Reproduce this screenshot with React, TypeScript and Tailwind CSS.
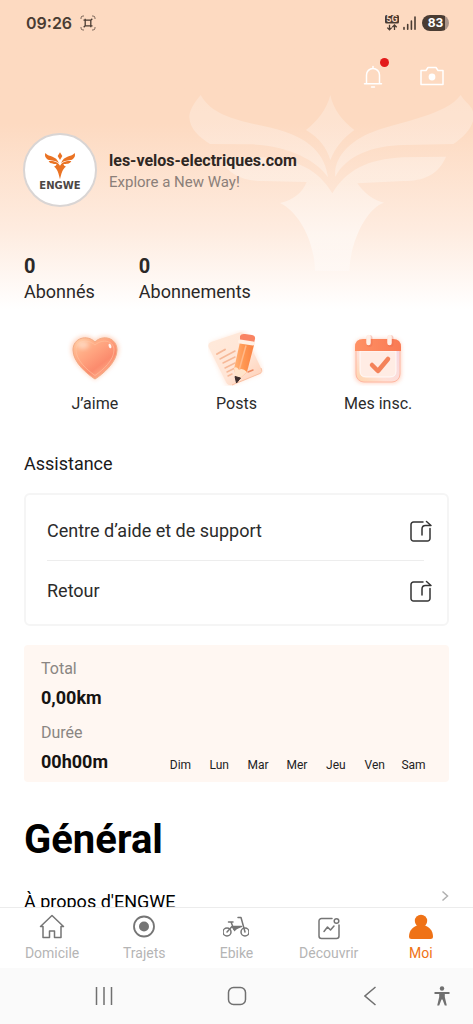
import React from 'react'

const stats = [
  { value: '0', label: 'Abonnés' },
  { value: '0', label: 'Abonnements' },
]

const days = ['Dim', 'Lun', 'Mar', 'Mer', 'Jeu', 'Ven', 'Sam']

function StatusBar() {
  return (
    <div className="flex h-[46px] items-center justify-between pl-[26px] pr-6 text-[#4a3c33]">
      <div className="flex items-center gap-2">
        <span className="font-['Inter','Roboto',sans-serif] text-base font-semibold">09:26</span>
        <svg className="size-4" viewBox="0 0 16 16" fill="none" stroke="currentColor">
          <path d="M1 4V3a2 2 0 0 1 2-2h1M12 1h1a2 2 0 0 1 2 2v1M15 12v1a2 2 0 0 1-2 2h-1M4 15H3a2 2 0 0 1-2-2v-1" strokeOpacity=".7" />
          <path d="M5.2 3.800V10.800H12.500M3.500 5.200H10.800V12.300M10.800 5.200L12.300 3.700M5.200 10.800L3.700 12.300" strokeWidth="1.3" />
        </svg>
      </div>
      <div className="flex items-center">
        <svg className="mr-1 h-4 w-3.5" viewBox="0 0 14 16">
          <rect width="14" height="8.5" rx="1.5" fill="currentColor" />
          <text x="7" y="7.400" textAnchor="middle" fontSize="9" fontWeight="700" fontFamily="Roboto" fill="#fddac1">5G</text>
          <path d="M4.5 9.8v4.7M2.3 12.6l2.2 2.2 2.2-2.2M9.5 15v-4.7M7.3 12.2l2.2-2.2 2.2 2.2" fill="none" stroke="currentColor" strokeWidth="1.3" />
        </svg>
        <svg className="mr-1.5 h-4 w-[13px]" viewBox="0 0 13 16" stroke="currentColor" strokeWidth="1.6" strokeLinecap="round">
          <path d="M1 12.5v1.7M4.7 9.5v4.7M8.4 6v8.2M12 2v12.2" />
        </svg>
        <div className="flex h-4 w-[27px] items-center justify-center rounded-full bg-linear-to-r from-[#4a3c33] from-84% to-[#ab958a] to-84%">
          <span className="font-['Inter','Roboto',sans-serif] text-xs leading-4 font-bold text-white">83</span>
        </div>
      </div>
    </div>
  )
}

function Watermark() {
  return (
    <svg className="absolute top-20 right-0 h-[227px] w-[303px]" viewBox="0 0 909 681" aria-hidden="true">
      <defs>
        <linearGradient id="wing" gradientUnits="userSpaceOnUse" x1="0" y1="40" x2="0" y2="580">
          <stop offset="0" stopColor="#fff" stopOpacity=".22" />
          <stop offset=".5" stopColor="#fff" stopOpacity=".32" />
          <stop offset=".8" stopColor="#fff" stopOpacity=".5" />
          <stop offset="1" stopColor="#fff" stopOpacity=".3" />
        </linearGradient>
      </defs>
      <g fill="url(#wing)">
        <path d="M92 45C70 72 58 92 58 112C60 150 90 172 120 192L240 193C350 196 440 240 474 292C466 225 420 180 345 155C260 127 135 125 92 45Z" />
        <path d="M872 45C830 105 690 125 610 155C530 185 490 240 496 290C530 225 610 197 700 195L850 192C890 165 925 125 905 85C895 70 880 60 872 45Z" />
        <path d="M481 45C470 90 440 125 408 150C450 175 470 205 481 240C495 205 518 175 553 150C520 125 490 90 481 45Z" />
        <path d="M828 230L700 232C590 238 530 270 487 340C445 270 385 238 275 232L146 230C174 285 220 303 280 303L410 306C398 338 370 360 330 369C385 395 433 480 435 572L538 572C542 480 590 385 642 368C610 362 582 338 562 310L700 303C760 303 805 285 828 230Z" />
      </g>
    </svg>
  )
}

function Avatar() {
  return (
    <div className="flex size-[74px] shrink-0 flex-col items-center rounded-full border-2 border-[#d9d5d4] bg-white pt-[17px]">
      <svg className="h-7 w-8 text-[#ea7324]" viewBox="0 0 96 84" fill="currentColor">
        <path d="M4 3C16 17 36 9 45 34C35 24 22 26 12 23C4 18 1 11 4 3Z" />
        <path d="M92 3C80 17 60 9 51 34C61 24 74 26 84 23C92 18 95 11 92 3Z" />
        <path d="M48 1L55 12L48 24L41 12Z" />
        <path d="M14 27C28 27 40 28 48 41C56 28 68 27 82 27C78 36 68 36 58 36Q60 42 66 44C56 50 52 64 48 82C44 64 40 50 30 44Q36 42 38 36C28 36 18 36 14 27Z" />
      </svg>
      <span className="font-['DejaVu_Sans',sans-serif] text-[10px] leading-[11px] font-bold text-[#4b4644]">ENGWE</span>
    </div>
  )
}

function Header() {
  return (
    <header className="relative bg-linear-to-b from-[#fddac1] from-40% via-[#feece0] via-75% to-white">
      <Watermark />
      <div className="relative">
        <StatusBar />
        <div className="flex h-[60px] items-center justify-end gap-[37px] pr-[29px] text-white">
          <button className="relative" aria-label="Notifications">
            <svg className="h-6 w-5" viewBox="0 0 20 24" fill="none" stroke="currentColor" strokeWidth="1.5" strokeLinecap="round" strokeLinejoin="round">
              <path d="M3.5 19.5V11a6.5 6.5 0 0 1 13 0v8.500M1.500 19.700h17M10 4.200V2.500M8.500 23h3" />
            </svg>
            <span className="absolute -top-1.5 -right-1.5 size-[9px] rounded-full bg-[#e31b1b]" />
          </button>
          <button aria-label="Appareil photo">
            <svg className="h-6 w-6" viewBox="0 0 24 24" fill="none" stroke="currentColor" strokeWidth="1.5" strokeLinejoin="round">
              <path d="M1 6.500h5l2-3h8l2 3h5v14H1z" />
              <circle cx="12" cy="13" r="3.4" fill="currentColor" stroke="none" />
            </svg>
          </button>
        </div>
        <div className="mt-[27px] flex items-center gap-3 px-[23px]">
          <Avatar />
          <div className="pt-0.5">
            <h1 className="text-base leading-[22px] font-bold text-[#2e2723]">les-velos-electriques.com</h1>
            <p className="text-[15px] leading-5 text-[#8b7f79]">Explore a New Way!</p>
          </div>
        </div>
        <div className="flex gap-11 px-6 pt-[46px] pb-1">
          {stats.map((s) => (
            <a key={s.label} href="#" className="text-lg leading-[26px] text-[#2b2827]">
              <strong className="block text-xl leading-[26px]">{s.value}</strong>
              {s.label}
            </a>
          ))}
        </div>
      </div>
    </header>
  )
}

function HeartIcon() {
  return (
    <svg className="size-14" viewBox="0 0 56 56">
      <defs>
        <linearGradient id="heart" x1="0" y1="0" x2=".8" y2="1">
          <stop offset="0" stopColor="#ffc99c" />
          <stop offset=".45" stopColor="#ffa27e" />
          <stop offset=".7" stopColor="#fb8b6d" />
          <stop offset="1" stopColor="#ffbd98" />
        </linearGradient>
        <filter id="glow" x="-30%" y="-30%" width="160%" height="160%">
          <feGaussianBlur stdDeviation="2.2" />
        </filter>
      </defs>
      <path d="M28 50C20 44 4 32 4 19C4 6 21 2 28 10C35 2 52 6 52 19C52 32 36 44 28 50Z" fill="#ffb491" opacity=".55" filter="url(#glow)" />
      <path d="M28 49C20 44 6 32 6 20C6 8 20 4 28 12C36 4 50 8 50 20C50 32 36 44 28 49Z" fill="url(#heart)" stroke="#f2ab85" />
      <path d="M28 45.500C20 40 9 30 9 20C9 11 20 8 28 15C36 8 47 11 47 20C47 30 36 40 28 45.500Z" fill="none" stroke="#ffc3a0" strokeOpacity=".6" />
      <ellipse cx="16" cy="15" rx="6" ry="4" fill="#fff" opacity=".4" filter="url(#glow)" />
      <ellipse cx="43" cy="16" rx="1.300" ry="2.400" fill="#fff" opacity=".9" transform="rotate(-20 43 16)" />
    </svg>
  )
}

function PostsIcon() {
  return (
    <svg className="size-14" viewBox="0 0 56 56">
      <defs>
        <linearGradient id="paper" x1="0" y1="0" x2="1" y2="1">
          <stop offset="0" stopColor="#ffeadb" />
          <stop offset=".6" stopColor="#ffe5d6" />
          <stop offset="1" stopColor="#ffcdb3" />
        </linearGradient>
        <linearGradient id="pencil" x1="0" y1="0" x2="1" y2="0">
          <stop offset="0" stopColor="#ffb37a" />
          <stop offset=".5" stopColor="#ff9651" />
          <stop offset="1" stopColor="#f98243" />
        </linearGradient>
      </defs>
      <path d="M1 18Q-1 14 3 12L32 2Q37 0 39 4L54 38Q56 42 52 44L23 56Q19 57 17 53Z" fill="#ffd8c2" opacity=".5" filter="url(#glow)" />
      <path d="M1 18Q-1 14 3 12L30 3Q35 1 37 5L53 38Q55 42 51 44L24 55Q20 56 18 52Z" fill="url(#paper)" />
      <path d="M24 55L52 43.500Q55 42 53 38" fill="none" stroke="#f8b08c" strokeOpacity=".7" />
      <g stroke="#f6b999" strokeWidth="1.500" strokeLinecap="round">
        <path d="M9 24l8-4.500" strokeWidth="2" />
        <path d="M12 29l15-8M15 33l12-6M17 38l10-5M19 42l7-3.500M20 46l4-2" />
        <path d="M40 42l5-2" stroke="#ee8a62" />
      </g>
      <path d="M32 12L46 15L39 42L29 51L26 39Z" fill="url(#pencil)" />
      <path d="M38 15.500L31 40.500" stroke="#ffb98a" strokeWidth="1.500" />
      <path d="M26 38Q29 36 31 40Q34 37 39 42L28 52Z" fill="#ffe3ca" />
      <path d="M27 46.500L32.500 48L28.500 53Z" fill="#3d2c2b" stroke="#3d2c2b" strokeLinejoin="round" />
      <path d="M32 6Q33 3.500 37 4L44 5Q47.500 5.500 47 9L46 13L32 11Z" fill="#f98362" />
      <path d="M32 11.500L45 13.500" stroke="#fff0e5" strokeWidth="4" strokeLinecap="round" />
    </svg>
  )
}

function CalendarIcon() {
  return (
    <svg className="size-14" viewBox="0 0 56 56">
      <defs>
        <linearGradient id="page" x1="0" y1="1" x2="1" y2="0">
          <stop offset="0" stopColor="#ffd4a9" />
          <stop offset=".35" stopColor="#ffe0d6" />
          <stop offset="1" stopColor="#f3d5e4" />
        </linearGradient>
        <linearGradient id="band" x1="0" y1="0" x2="1" y2="0">
          <stop offset="0" stopColor="#ff9164" />
          <stop offset="1" stopColor="#f97a54" />
        </linearGradient>
      </defs>
      <rect x="5" y="9" width="46" height="44" rx="8" fill="#ffb99f" opacity=".7" filter="url(#glow)" />
      <rect x="6" y="10" width="44" height="42" rx="8" fill="url(#page)" stroke="#ffb8a2" />
      <path d="M10 21h36v20q0 6-6 6H16q-6 0-6-6z" fill="#ffece4" stroke="#fff" strokeOpacity=".8" />
      <path d="M5 21V17Q5 9 13 9H43Q51 9 51 17V21Z" fill="url(#band)" />
      <path d="M19.500 8v6M40.500 8v6" stroke="#e7654a" strokeWidth="6" strokeLinecap="round" opacity=".3" />
      <path d="M18.500 7v6M39.500 7v6" stroke="#fff0e8" strokeWidth="4.500" strokeLinecap="round" />
      <path d="M22 35L28 41L38 29" fill="none" stroke="#f4835a" strokeWidth="4.500" strokeLinecap="round" strokeLinejoin="round" />
    </svg>
  )
}

const shortcuts = [
  { label: 'J’aime', icon: <HeartIcon /> },
  { label: 'Posts', icon: <PostsIcon /> },
  { label: 'Mes insc.', icon: <CalendarIcon /> },
]

function ShareIcon() {
  return (
    <svg className="size-[22px]" viewBox="0 0 22 22" fill="none" stroke="#333" strokeWidth="1.500" strokeLinecap="round" strokeLinejoin="round">
      <path d="M13 2H3.500A2.500 2.500 0 0 0 1 4.500v14A2.500 2.500 0 0 0 3.500 21h14a2.500 2.500 0 0 0 2.500-2.500V8.500" />
      <path d="M12 15V9Q12 5.500 15.500 5.500H21L16.500 1.500" />
    </svg>
  )
}

function Support() {
  return (
    <section className="mt-9 px-6">
      <h2 className="text-lg leading-6 text-[#1a1a1a]">Assistance</h2>
      <div className="mt-[17px] rounded-md border-2 border-[#f5f5f5] pt-[6px] pb-1 pr-[15px] pl-[21px] text-lg text-[#2b2b2b]">
        <a href="#" className="flex h-[59px] items-center justify-between">
          Centre d’aide et de support
          <ShareIcon />
        </a>
        <div className="mr-2 h-px bg-[#ededed]" />
        <a href="#" className="flex h-[59px] items-center justify-between">
          Retour
          <ShareIcon />
        </a>
      </div>
    </section>
  )
}

function RideSummary() {
  return (
    <section className="mx-6 mt-[19px] flex items-end justify-between rounded-sm bg-[#fff7f2] pt-3 pr-4 pb-[6px] pl-[17px]">
      <dl className="text-lg leading-7 font-bold text-[#161412]">
        <dt className="text-base leading-6 font-normal text-[#8a8683]">Total</dt>
        <dd className="pt-[3px] pb-[9px]">0,00km</dd>
        <dt className="text-base leading-6 font-normal text-[#8a8683]">Durée</dt>
        <dd className="pt-[3px]">00h00m</dd>
      </dl>
      <ul className="grid w-[272px] grid-cols-7 pb-[3px] text-center text-xs leading-4 text-[#222]">
        {days.map((d) => (
          <li key={d}>{d}</li>
        ))}
      </ul>
    </section>
  )
}

const tabs = [
  {
    label: 'Domicile',
    icon: <path d="M1.500 12.500L13 1.500L24.500 12.500H22V23.500H15.500V17H10.500V23.500H4V12.500Z" strokeLinejoin="round" />,
  },
  {
    label: 'Trajets',
    icon: (
      <>
        <circle cx="13" cy="12.500" r="10" strokeWidth="1.800" />
        <circle cx="13" cy="12.500" r="5" fill="currentColor" stroke="none" />
      </>
    ),
  },
  {
    label: 'Ebike',
    icon: (
      <>
        <circle cx="4" cy="18" r="4" />
        <circle cx="22" cy="18" r="4" />
        <path d="M4 18L9 12.500H18.500M5.500 8H10M8 8L11 15.500M15 3.500H18L22 18M11 15.500L18 12.500" strokeLinecap="round" strokeLinejoin="round" />
        <path d="M8.500 12.500H16L11.500 17.500Z" fill="currentColor" stroke="none" />
      </>
    ),
  },
  {
    label: 'Découvrir',
    icon: (
      <>
        <path d="M16 4.500H5.500A2.500 2.500 0 0 0 3 7v15A2.500 2.500 0 0 0 5.500 24.500h15a2.500 2.500 0 0 0 2.500-2.500V11" strokeLinecap="round" />
        <circle cx="20.500" cy="7" r="2.300" />
        <path d="M8 17.500L11.500 13L14.500 16L18 12" strokeLinecap="round" strokeLinejoin="round" />
      </>
    ),
  },
  {
    label: 'Moi',
    active: true,
    icon: (
      <g fill="currentColor" stroke="none">
        <circle cx="13" cy="7" r="6.200" />
        <path d="M1 22.500C1 16 6 12 10 11.500H16C20 12 25 16 25 22.500Q25 25 22.500 25H3.500Q1 25 1 22.500Z" />
      </g>
    ),
  },
]

function TabBar() {
  return (
    <nav className="grid h-[61px] shrink-0 grid-cols-5 border-t border-[#ececec] bg-white px-[6px] pt-[6px]">
      {tabs.map((t) => (
        <a key={t.label} href="#" className={t.active ? 'flex flex-col items-center text-[#ef7216]' : 'flex flex-col items-center text-[#757575]'}>
          <svg className="size-[26px]" viewBox="0 0 26 26" fill="none" stroke="currentColor" strokeWidth="1.500">
            {t.icon}
          </svg>
          <span className={t.active ? 'text-sm leading-[26px]' : 'text-sm leading-[26px] text-[#b5b5b5]'}>{t.label}</span>
        </a>
      ))}
    </nav>
  )
}

function SystemBar() {
  return (
    <div className="grid h-14 shrink-0 grid-cols-[1fr_56px_1fr] items-center bg-[#fafafa] text-[#707070]">
      <button className="ml-[95px] w-[18px]" aria-label="Applications récentes">
        <svg className="h-[18px] w-[18px]" viewBox="0 0 18 18" stroke="currentColor" strokeWidth="1.500">
          <path d="M1.500 0v18M9 0v18M16.500 0v18" />
        </svg>
      </button>
      <button className="mx-auto" aria-label="Accueil">
        <svg className="size-5" viewBox="0 0 20 20" fill="none" stroke="currentColor" strokeWidth="1.500">
          <rect x="1.500" y="1.500" width="17" height="17" rx="5" />
        </svg>
      </button>
      <div className="flex items-center justify-end gap-[58px] pr-[23px]">
        <button aria-label="Retour">
          <svg className="h-5 w-3" viewBox="0 0 12 20" fill="none" stroke="currentColor" strokeWidth="1.500">
            <path d="M11.500 1L1 10L11.500 19" />
          </svg>
        </button>
        <button aria-label="Accessibilité">
          <svg className="h-5 w-4" viewBox="0 0 16 20" fill="currentColor">
            <circle cx="8" cy="2.500" r="2.200" />
            <path d="M.5 6H15.500V8H10.800V11L12.800 19.500H10.800L8.500 13.500H7.500L5.200 19.500H3.200L5.200 11V8H.5Z" />
          </svg>
        </button>
      </div>
    </div>
  )
}

function App() {
  return (
    <div className="flex h-screen flex-col bg-white font-['Roboto',sans-serif]">
      <main className="min-h-0 flex-1 overflow-hidden">
        <Header />
        <div className="mt-[21px] grid grid-cols-3 px-6">
          {shortcuts.map((s) => (
            <button key={s.label} className="flex flex-col items-center gap-1.5 text-base leading-6 text-[#2b2b2b]">
              {s.icon}
              {s.label}
            </button>
          ))}
        </div>
        <Support />
        <RideSummary />
        <section className="mt-8 px-6 text-black">
          <h2 className="text-[40px] leading-[52px] font-bold">Général</h2>
          <a href="#" className="mt-6 flex items-start justify-between text-lg leading-6">
            À propos d'ENGWE
            <svg className="h-3 w-2" viewBox="0 0 8 12" fill="none" stroke="#b0b0b0" strokeWidth="1.500">
              <path d="M1.500 1.500L6.500 6L1.500 10.500" />
            </svg>
          </a>
        </section>
      </main>
      <TabBar />
      <SystemBar />
    </div>
  )
}

export default App
